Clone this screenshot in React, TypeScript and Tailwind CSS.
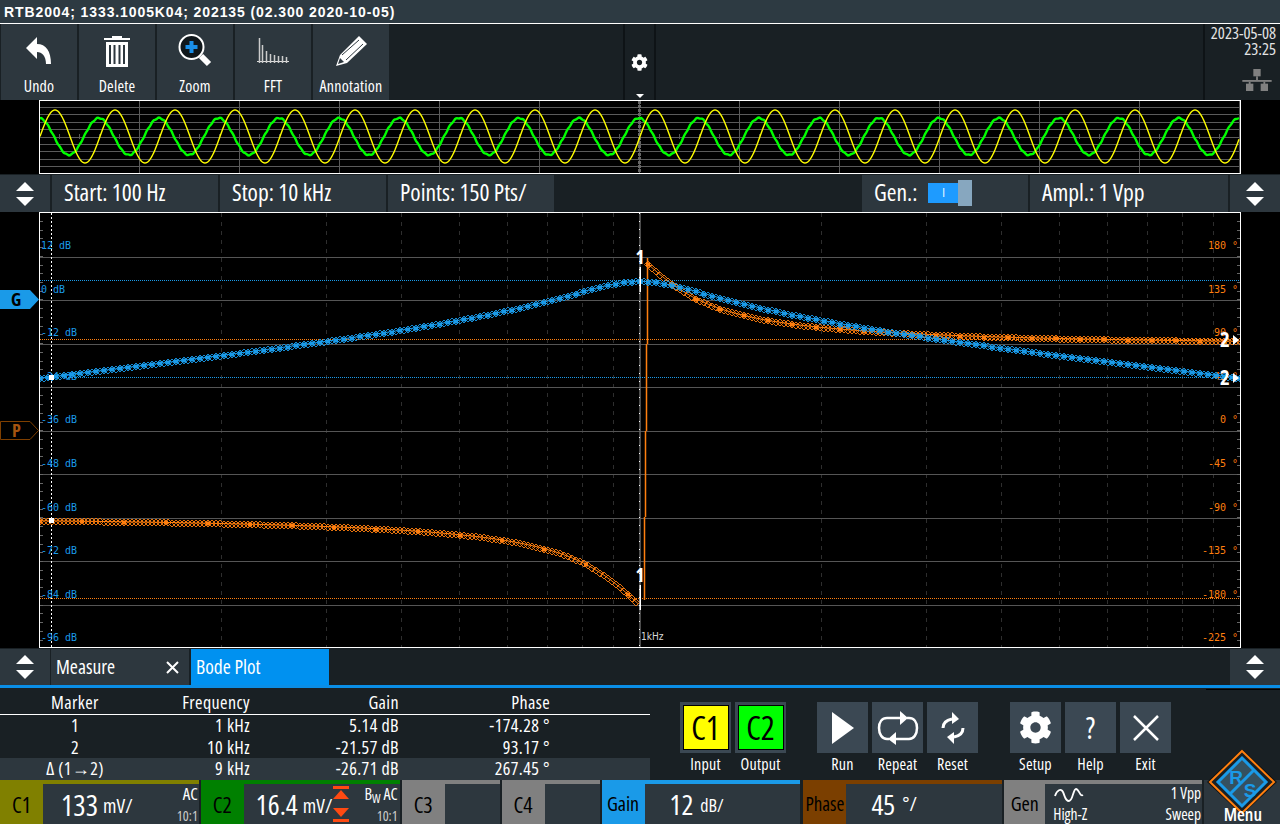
import { FaCog } from "react-icons/fa"

const X0 = 40
const DEC = 600

function gainY(x: number) {
  const r = Math.pow(10, (x - 640) / DEC)
  const v = 2.18 * (r - 1 / r)
  const db = 5.14 - 10 * Math.log10(1 + v * v)
  return 300 - db * 3.63
}
function phaseY(x: number) {
  const r = Math.pow(10, (x - 640) / DEC)
  const v = 2.18 * (r - 1 / r)
  const at = (Math.atan(Math.abs(v)) * 180) / Math.PI
  const deg = x < 640 ? -180 + at : 180 - at
  return 431 - deg * 0.969
}

const range = (a: number, b: number, s: number) => {
  const out: number[] = []
  for (let v = a; v <= b; v += s) out.push(v)
  return out
}

function Trace({ fn, from, to, color, solidEvery }: { fn: (x: number) => number; from: number; to: number; color: string; solidEvery: number }) {
  const xs = range(from, to, 4)
  const line = range(from, to, 2).map((x) => `${x},${fn(x).toFixed(1)}`).join(" ")
  return (
    <g>
      <polyline points={line} fill="none" stroke={color} strokeWidth="1" />
      {xs.map((x) => {
        const y = Math.round(fn(x)) + 0.5
        return <path key={x} d={`M${x - 3.5} ${y}L${x} ${y - 3.5}L${x + 3.5} ${y}L${x} ${y + 3.5}Z`} fill="none" stroke={color} strokeWidth="0.9" />
      })}
      {range(from, to, solidEvery).map((x) => (
        <rect key={x} x={x - 2} y={Math.round(fn(x)) - 1.5} width="4" height="4" fill={color} />
      ))}
    </g>
  )
}

function MiniPlot() {
  const yellow = range(40, 1239, 1).map((x) => `${x},${(136.5 - 26.5 * Math.sin(((x - 40) * Math.PI) / 30)).toFixed(1)}`).join(" ")
  const green = range(40, 1239, 1)
    .map((x) => `${x},${(136.5 - 18.5 * Math.cos(((x - 39) * Math.PI) / 30) + Math.sin(x * 7.3) * 0.5).toFixed(1)}`)
    .join(" ")
  return (
    <svg width="1200" height="72" viewBox="40 101 1200 72" className="block">
      {range(0, 8, 1).map((i) => (
        <line key={i} x1="40" x2="1240" y1={Math.round(107 + i * 7.4) + 0.5} y2={Math.round(107 + i * 7.4) + 0.5} stroke="#5a5a5a" />
      ))}
      {range(139, 1239, 100).map((x) => (
        <line key={x} x1={x + 0.5} x2={x + 0.5} y1="101" y2="173" stroke="#5a5a5a" />
      ))}
      {range(59, 1239, 20).map((x) => (
        <line key={x} x1={x + 0.5} x2={x + 0.5} y1="134" y2="139" stroke="#5a5a5a" />
      ))}
      <line x1="639.5" x2="639.5" y1="101" y2="173" stroke="#666" strokeWidth="3" strokeDasharray="3 1" />
      <polyline points={green} fill="none" stroke="#00ff00" strokeWidth="2.4" />
      <polyline points={yellow} fill="none" stroke="#ffff00" strokeWidth="1.4" />
    </svg>
  )
}

function MainPlot() {
  const gridY = [257, 300, 344, 387, 431, 474, 518, 561, 605]
  const minor = [2, 3, 4, 5, 6, 7, 8, 9]
  const left = minor.map((n) => Math.round(X0 + DEC * Math.log10(n)))
  const right = minor.map((n) => Math.round(640 + DEC * Math.log10(n)))
  const db = ["12 dB", "0 dB", "-12 dB", "-24 dB", "-36 dB", "-48 dB", "-60 dB", "-72 dB", "-84 dB", "-96 dB"]
  const deg = ["180 °", "135 °", "90 °", "45 °", "0 °", "-45 °", "-90 °", "-135 °", "-180 °", "-225 °"]
  const mono = "'DejaVu Sans Mono', monospace"
  const marker = "'Open Sans', sans-serif"
  return (
    <svg width="1200" height="434" viewBox="40 213 1200 434" className="block">
      {[...left, ...right].map((x) => (
        <line key={x} x1={x + 0.5} x2={x + 0.5} y1="213" y2="647" stroke="#2e2e2e" strokeDasharray="4 5" />
      ))}
      {gridY.map((y) => (
        <line key={y} x1="40" x2="1240" y1={y + 0.5} y2={y + 0.5} stroke="#555555" />
      ))}
      {range(0, 49, 1).map((i) => (
        <g key={i}>
          <line x1="40" x2="43" y1={Math.round(221 + i * 8.72) + 0.5} y2={Math.round(221 + i * 8.72) + 0.5} stroke="#666" />
          <line x1="1237" x2="1240" y1={Math.round(221 + i * 8.72) + 0.5} y2={Math.round(221 + i * 8.72) + 0.5} stroke="#666" />
        </g>
      ))}
      <line x1="640" x2="640" y1="213" y2="647" stroke="#666" strokeWidth="1.5" />
      <line x1="639.5" x2="639.5" y1="213" y2="647" stroke="#fff" strokeDasharray="1 7" />
      <line x1="51.5" x2="51.5" y1="213" y2="647" stroke="#fff" strokeDasharray="2 2" />

      <line x1="40" x2="1240" y1="280.5" y2="280.5" stroke="#1a9ae8" strokeDasharray="1 1" />
      <line x1="40" x2="1240" y1="377.5" y2="377.5" stroke="#1a9ae8" strokeDasharray="1 1" />
      <line x1="40" x2="1240" y1="339.5" y2="339.5" stroke="#ff7f0f" strokeDasharray="1 1" />
      <line x1="40" x2="1240" y1="598.5" y2="598.5" stroke="#ff7f0f" strokeDasharray="1 1" />

      {db.map((t, i) => (
        <text key={t} x="41" y={Math.round(249 + i * 43.6)} fontFamily={mono} fontSize="10" fill="#1a9ae8">{t}</text>
      ))}
      {deg.map((t, i) => (
        <text key={t} x="1238" y={Math.round(249 + i * 43.6)} textAnchor="end" fontFamily={mono} fontSize="10" fill="#ff7f0f">{t}</text>
      ))}

      <path d="M647.5 258V344M646.5 344V431M645.5 431V517M644.5 517V600" stroke="#ff7f0f" strokeWidth="1.5" fill="none" />
      <Trace fn={phaseY} from={40} to={640 - 1} color="#ff7f0f" solidEvery={42} />
      <Trace fn={phaseY} from={648} to={1240} color="#ff7f0f" solidEvery={24} />
      <Trace fn={gainY} from={40} to={1240} color="#1a9ae8" solidEvery={8} />
      <rect x="49" y="375" width="5" height="5" fill="#fff" />
      <rect x="49" y="518" width="5" height="5" fill="#fff" />

      <rect x="639.5" y="267" width="1.5" height="25" fill="#fff" />
      <rect x="639.5" y="585" width="1.5" height="25" fill="#fff" />
      <text x="640" y="264" textAnchor="middle" fontFamily={marker} fontWeight="700" fontSize="19" fill="#fff">1</text>
      <text x="640" y="582" textAnchor="middle" fontFamily={marker} fontWeight="700" fontSize="19" fill="#fff">1</text>
      <text x="641" y="640" fontFamily="'DejaVu Sans', sans-serif" fontSize="10" fill="#d8d8d8">1kHz</text>

      <text x="1225" y="347" textAnchor="middle" fontFamily={marker} fontWeight="700" fontSize="21" fill="#fff">2</text>
      <text x="1225" y="385" textAnchor="middle" fontFamily={marker} fontWeight="700" fontSize="21" fill="#fff">2</text>
      <path d="M1233 335L1239 340L1233 345Z" fill="#fff" />
      <path d="M1233 373L1239 378L1233 383Z" fill="#fff" />
    </svg>
  )
}

function UpDown() {
  return (
    <svg width="18" height="24" viewBox="0 0 18 24">
      <path d="M9 0L18 9H0Z" fill="#fff" />
      <path d="M0 15H18L9 24Z" fill="#fff" />
    </svg>
  )
}

function ToolButton({ label, children }: { label: string; children: React.ReactNode }) {
  return (
    <div className="w-[76px] h-full bg-[#2d373e] flex flex-col items-center">
      <div className="h-[50px] flex items-center justify-center pt-1">{children}</div>
      <div className="text-[16px] leading-[25px] tracking-[0.2px] text-white">{label}</div>
    </div>
  )
}

function ControlCell({ children, w }: { children: React.ReactNode; w: string }) {
  return <div className={`${w} h-[37px] bg-[#2d373e] flex items-center pl-3 pb-[1px] text-[23.5px] text-white`}>{children}</div>
}

function ActionButton({ label, w = "w-[51px]", bg = "bg-[#3b4853]", children }: { label: string; w?: string; bg?: string; children: React.ReactNode }) {
  return (
    <div className={`${w} flex flex-col items-center`}>
      <div className={`w-full h-[51px] ${bg} flex items-center justify-center`}>{children}</div>
      <div className="text-[16px] leading-[20px] mt-[1px] tracking-[0.2px] text-white whitespace-nowrap">{label}</div>
    </div>
  )
}

function Channel({ w, strip, label, labelW = "w-[43px]", labelSize = "text-[22px]", children }: { w: string; strip: string; label: string; labelW?: string; labelSize?: string; children?: React.ReactNode }) {
  return (
    <div className={`${w} h-[44px] ${strip} pt-[4px] flex`}>
      <div className={`${labelW} flex items-center justify-center text-black ${labelSize} leading-none`}>{label}</div>
      <div className="flex-1 bg-[#2d373e] relative text-white flex items-center">{children}</div>
    </div>
  )
}

const rows = [
  ["1", "1 kHz", "5.14 dB", "-174.28 °"],
  ["2", "10 kHz", "-21.57 dB", "93.17 °"],
  ["Δ (1→2)", "9 kHz", "-26.71 dB", "267.45 °"],
]

export default function App() {
  return (
    <div className="w-[1280px] h-[824px] bg-black overflow-hidden font-['Open_Sans',sans-serif] font-stretch-condensed text-white">
      <div className="h-[24px] bg-[#2d3a42] border-b border-white px-1 font-['Liberation_Sans',sans-serif] font-stretch-normal font-bold text-[14px] leading-[24px] tracking-[0.9px]">
        RTB2004; 1333.1005K04; 202135 (02.300 2020-10-05)
      </div>

      <div className="h-[76px] bg-[#192024] flex pl-[1px]">
        <div className="flex gap-[2px]">
          <ToolButton label="Undo">
            <svg width="28" height="28" viewBox="0 0 28 28"><path d="M1 11L12 0V7C21 7 26 14 26 27H21C21 19 17 15 12 15V22Z" fill="#fff" /></svg>
          </ToolButton>
          <ToolButton label="Delete">
            <svg width="26" height="32" viewBox="0 0 26 32">
              <path d="M8 3V1H18V3H26V5H0V3Z" fill="#fff" />
              <path d="M2 7H24V32H2Z" fill="#fff" />
              <path d="M6 10V29M10.500 10V29M15.500 10V29M20 10V29" stroke="#2d373e" strokeWidth="2" />
            </svg>
          </ToolButton>
          <ToolButton label="Zoom">
            <svg width="34" height="34" viewBox="0 0 34 34">
              <circle cx="13.500" cy="13" r="12" fill="#10171b" stroke="#fff" strokeWidth="2" />
              <path d="M13.500 7V19M7.500 13H19.500" stroke="#1a8fe8" strokeWidth="4" />
              <path d="M23 22L31 30" stroke="#fff" strokeWidth="6" />
            </svg>
          </ToolButton>
          <ToolButton label="FFT">
            <svg width="34" height="28" viewBox="0 0 34 28">
              <path d="M1 24.500H33" stroke="#ddd" />
              {[[3, 1], [6, 8], [10, 14], [14, 17], [18, 18], [22, 19], [26, 19], [30, 20]].map(([x, y]) => (
                <path key={x} d={`M${x}.5 ${y}V26`} stroke="#ccc" strokeWidth="1.500" />
              ))}
            </svg>
          </ToolButton>
          <ToolButton label="Annotation">
            <svg width="32" height="32" viewBox="0 0 32 32">
              <path d="M24 1L32 9L12 28L1 31L5 20Z" fill="#fff" />
              <path d="M7 20L24 5M11 25L28 9" stroke="#2d373e" strokeWidth="1" />
              <path d="M5 23L9 27L3 29Z" fill="#2d373e" />
            </svg>
          </ToolButton>
        </div>
        <div className="ml-[234px] w-[33px] border-x-2 border-[#0e1316] flex flex-col items-center relative">
          <FaCog className="mt-[30px] text-white" size={17} />
          <svg className="absolute bottom-[2px]" width="8" height="4" viewBox="0 0 8 4"><path d="M0 0H8L4 4Z" fill="#fff" /></svg>
        </div>
        <div className="flex-1" />
        <div className="w-[77px] border-l-2 border-[#0e1316] text-right pr-1 pt-[1px] text-[16.500px] leading-[16px] text-[#e4e4e4] flex flex-col">
          <div>2023-05-08</div>
          <div>23:25</div>
          <svg className="self-end mr-[3px] mt-[12px]" width="32" height="22" viewBox="0 0 32 24" fill="#808080">
            <rect x="12" y="0" width="8" height="8" /><rect x="15" y="8" width="2" height="4" /><rect x="0" y="12" width="32" height="2" />
            <rect x="7" y="14" width="2" height="3" /><rect x="23" y="14" width="2" height="3" />
            <rect x="4" y="16" width="8" height="8" /><rect x="20" y="16" width="8" height="8" />
          </svg>
        </div>
      </div>

      <div className="h-[74px] pl-[39px]">
        <div className="w-[1202px] h-[74px] border border-white">
          <MiniPlot />
        </div>
      </div>

      <div className="h-[38px] bg-[#192024] flex items-start gap-[2px] pt-[1px]">
        <div className="w-[50px] h-[37px] bg-[#2d373e] flex items-center justify-center"><UpDown /></div>
        <ControlCell w="w-[166px]">Start: 100 Hz</ControlCell>
        <ControlCell w="w-[166px]">Stop: 10 kHz</ControlCell>
        <ControlCell w="w-[166px]">Points: 150 Pts/</ControlCell>
        <div className="w-[304px]" />
        <ControlCell w="w-[166px]">
          Gen.:
          <span className="ml-[11px] w-[30px] h-[20px] bg-[#1e9bff] flex items-center justify-center text-[12px] leading-none">I</span>
          <span className="w-[14px] h-[26px] bg-[#87a7bf]" />
        </ControlCell>
        <ControlCell w="w-[198px]">Ampl.: 1 Vpp</ControlCell>
        <div className="w-[50px] h-[37px] bg-[#2d373e] flex items-center justify-center"><UpDown /></div>
      </div>

      <div className="h-[436px] flex relative">
        <div className="w-[39px]" />
        <div className="w-[1202px] h-[436px] border border-white">
          <MainPlot />
        </div>
        <svg className="absolute left-0 top-[78px]" width="39" height="19" viewBox="0 0 39 19"><path d="M0 0H30L39 9.500L30 19H0Z" fill="#1a9ae8" /></svg>
        <span className="absolute left-[11px] top-[77px] text-[18px] leading-[20px] font-bold text-black">G</span>
        <svg className="absolute left-0 top-[209px]" width="39" height="19" viewBox="0 0 39 19"><path d="M0.500 0.500H30L38.500 9.500L30 18.500H0.500Z" fill="#000" stroke="#7f3f00" /></svg>
        <span className="absolute left-[12px] top-[208px] text-[18px] leading-[20px] font-bold text-[#a5540f]">P</span>
      </div>

      <div className="h-[37px] bg-[#192024] flex items-stretch text-[19.500px] pt-[1px]">
        <div className="w-[50px] bg-[#2d373e] flex items-center justify-center"><UpDown /></div>
        <div className="ml-[1px] w-[138px] bg-[#2d373e] flex items-center justify-between pl-[5px] pr-[10px]">
          Measure
          <svg width="13" height="13" viewBox="0 0 13 13"><path d="M1 1L12 12M12 1L1 12" stroke="#fff" strokeWidth="2" /></svg>
        </div>
        <div className="ml-[2px] w-[138px] bg-[#0091f0] flex items-center pl-[5px]">Bode Plot</div>
        <div className="flex-1" />
        <div className="w-[50px] bg-[#2d373e] flex items-center justify-center"><UpDown /></div>
      </div>
      <div className="h-[3px] bg-[#0a8ee6]" />

      <div className="h-[92px] bg-[#192024] flex relative">
        <div className="absolute right-0 top-[1px] w-[74px] h-px bg-black" />
        <div className="w-[650px] text-[18px] leading-[21px] tracking-[0.4px]">
          <div className="h-[27px] pt-[2px] border-b border-white grid grid-cols-[150px_100px_149px_151px] items-center">
            <div className="text-center">Marker</div>
            <div className="text-right">Frequency</div>
            <div className="text-right">Gain</div>
            <div className="text-right">Phase</div>
          </div>
          {rows.map((r, i) => (
            <div key={r[0]} className={`h-[21.500px] grid grid-cols-[150px_100px_149px_151px] items-center ${i === 2 ? "bg-[#2d373e]" : ""}`}>
              <div className="text-center">{r[0]}</div>
              <div className="text-right">{r[1]}</div>
              <div className="text-right">{r[2]}</div>
              <div className="text-right">{r[3]}</div>
            </div>
          ))}
        </div>
        <div className="ml-[30px] mt-[14px] flex items-start">
          <div className="flex gap-[4px]">
            <ActionButton label="Input">
              <div className="w-[46px] h-[45px] bg-[#ffff00] border border-black flex items-center justify-center text-black text-[33px]">C1</div>
            </ActionButton>
            <ActionButton label="Output">
              <div className="w-[46px] h-[45px] bg-[#00ff00] border border-black flex items-center justify-center text-black text-[33px]">C2</div>
            </ActionButton>
          </div>
          <div className="ml-[31px] flex gap-[4px]">
            <ActionButton label="Run">
              <svg width="22" height="32" viewBox="0 0 22 32"><path d="M0 0L22 16L0 32Z" fill="#fff" /></svg>
            </ActionButton>
            <ActionButton label="Repeat">
              <svg width="42" height="34" viewBox="0 0 42 34" fill="none">
                <path d="M12 28H10C5 28 2 23 2 17C2 11 5 7 10 7H24" stroke="#fff" strokeWidth="2.500" />
                <path d="M30 7H32C37 7 40 11 40 17C40 23 37 28 32 28H18" stroke="#fff" strokeWidth="2.500" />
                <path d="M23 0L31 7L23 14Z" fill="#fff" />
                <path d="M19 21L11 28L19 34Z" fill="#fff" />
              </svg>
            </ActionButton>
            <ActionButton label="Reset">
              <svg width="24" height="34" viewBox="0 0 24 34" fill="none">
                <path d="M2 17C2 12 6 9 11 8M22 17C22 22 18 25 13 26" stroke="#fff" strokeWidth="3" />
                <path d="M11 1L18 8L11 13Z" fill="#fff" />
                <path d="M13 21L6 26L13 33Z" fill="#fff" />
              </svg>
            </ActionButton>
          </div>
          <div className="ml-[32px] flex gap-[4px]">
            <ActionButton label="Setup"><FaCog size={33} className="text-white" /></ActionButton>
            <ActionButton label="Help"><span className="text-[30px] text-white leading-none">?</span></ActionButton>
            <ActionButton label="Exit">
              <svg width="26" height="26" viewBox="0 0 26 26"><path d="M1 1L25 25M25 1L1 25" stroke="#fff" strokeWidth="2.500" /></svg>
            </ActionButton>
          </div>
        </div>
      </div>

      <div className="h-[44px] bg-[#192024] flex relative">
        <Channel w="w-[199px]" strip="bg-[#808000]" label="C1">
          <span className="ml-[18px] text-[29px] leading-none">133</span>
          <span className="ml-[5px] mt-[3px] text-[20px] leading-none">mV/</span>
          <span className="absolute right-[1px] top-[1px] text-[17px] leading-[18px]">AC</span>
          <span className="absolute right-[1px] bottom-[1px] text-[14px] leading-[14px] text-[#ccc]">10:1</span>
        </Channel>
        <Channel w="w-[199px] ml-[2px]" strip="bg-[#008000]" label="C2">
          <span className="ml-[12px] text-[28px] leading-none">16.4</span>
          <span className="ml-[5px] mt-[3px] text-[20px] leading-none">mV/</span>
          <svg className="absolute left-[89px] top-[2px]" width="16" height="36" viewBox="0 0 16 36" fill="#ff4a12">
            <rect width="16" height="3" /><path d="M8 4L16 13H0Z" /><path d="M0 22H16L8 31Z" /><rect y="33" width="16" height="3" />
          </svg>
          <span className="absolute right-[2px] top-[1px] text-[16px] leading-[18px]">B<sub className="text-[12px]">W</sub> AC</span>
          <span className="absolute right-[2px] bottom-[1px] text-[14px] leading-[14px] text-[#ccc]">10:1</span>
        </Channel>
        <Channel w="w-[98px] ml-[2px]" strip="bg-[#808080]" label="C3" />
        <Channel w="w-[98px] ml-[2px]" strip="bg-[#808080]" label="C4" />
        <Channel w="w-[199px] ml-[2px]" strip="bg-[#1a9ae8]" label="Gain" labelSize="text-[20px]">
          <span className="ml-[25px] text-[28px] leading-none">12</span>
          <span className="ml-[7px] mt-[2px] text-[18px] leading-none">dB/</span>
        </Channel>
        <Channel w="w-[199px] ml-[3px]" strip="bg-[#7b3f00]" label="Phase" labelSize="text-[19px]">
          <span className="ml-[25px] text-[28px] leading-none">45</span>
          <span className="ml-[7px] text-[20px] leading-none">°/</span>
        </Channel>
        <Channel w="w-[198px] ml-[2px]" strip="bg-[#808080]" label="Gen" labelW="w-[41px]" labelSize="text-[20px]">
          <svg className="absolute left-[9px] top-[3px]" width="30" height="16" viewBox="0 0 30 16" fill="none">
            <path d="M1 9C3 3 7 1 9 5C11 9 11 14 15 14C19 14 19 2 22 2C25 2 26 10 29 8" stroke="#fff" strokeWidth="1.800" />
          </svg>
          <span className="absolute left-[8px] bottom-[1px] text-[15.500px] leading-[17px]">High-Z</span>
          <span className="absolute right-[1px] top-0 text-[15.500px] leading-[18px]">1 Vpp</span>
          <span className="absolute right-[1px] bottom-[1px] text-[15.500px] leading-[17px]">Sweep</span>
        </Channel>
        <div className="ml-[2px] w-[76px] bg-[#2d373e]" />
        <svg className="absolute left-[1207px] top-[-31px]" width="70" height="66" viewBox="0 0 70 66">
          <path d="M35 0L70 33L35 66L0 33Z" fill="#111" />
          <path d="M35 2L67 33L35 64L3 33Z" fill="#192024" stroke="#ff7f0f" strokeWidth="2" />
          <path d="M35 9L59 33L35 57L11 33Z" fill="#35505f" stroke="#1a9ae8" strokeWidth="3" />
          <path d="M47 21L23 45" stroke="#1a9ae8" strokeWidth="3" />
          <text x="29" y="35" textAnchor="middle" fontFamily="'Liberation Sans', sans-serif" fontWeight="700" fontSize="19" fill="#1a9ae8">R</text>
          <text x="43" y="48" textAnchor="middle" fontFamily="'Liberation Sans', sans-serif" fontWeight="700" fontSize="19" fill="#1a9ae8">S</text>
        </svg>
        <span className="absolute right-[18px] bottom-[1px] text-[18px] font-semibold leading-[18px]">Menu</span>
      </div>
    </div>
  )
}
